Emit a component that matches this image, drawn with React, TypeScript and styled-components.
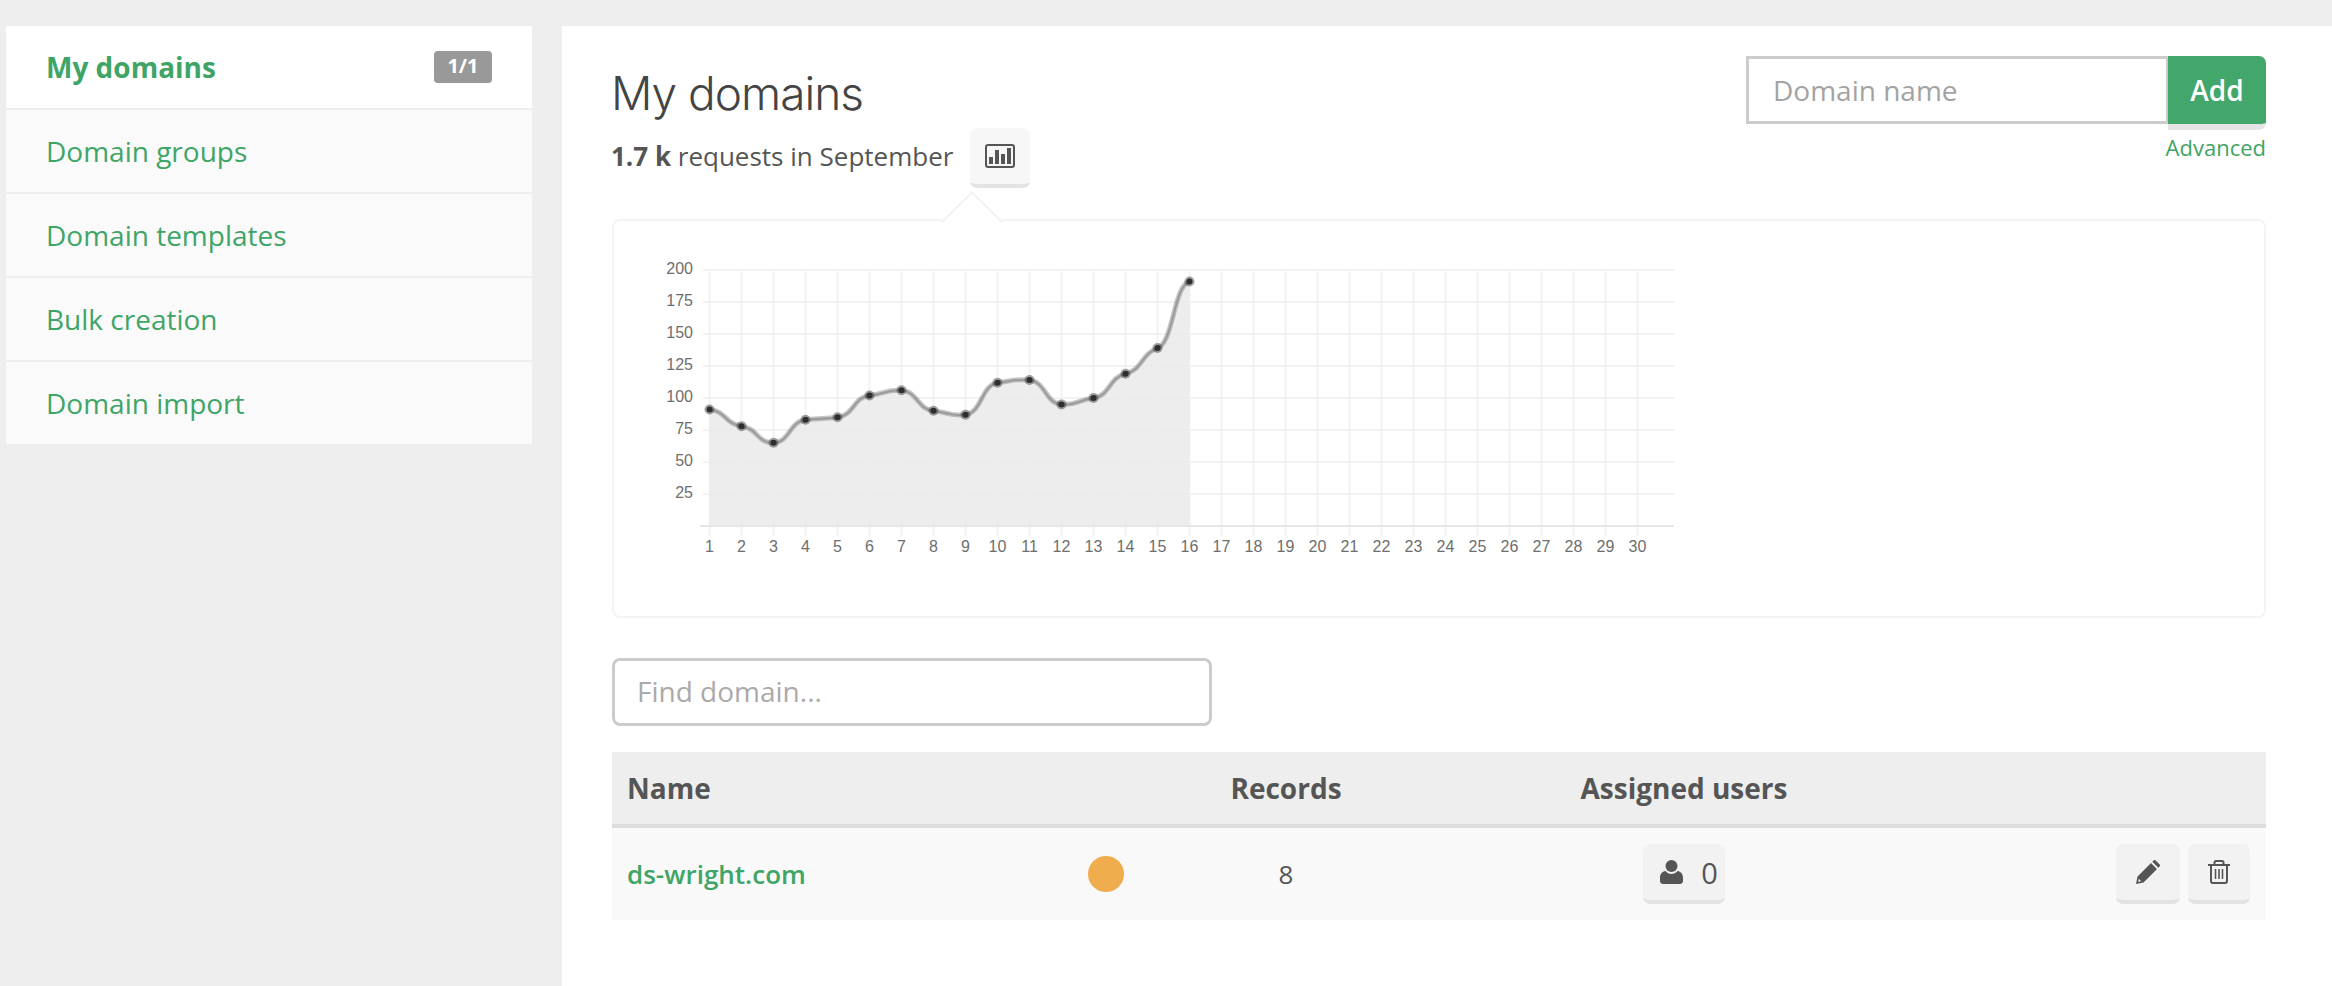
import React from 'react';
import styled, { createGlobalStyle } from 'styled-components';

const GlobalStyle = createGlobalStyle`
  * { box-sizing: border-box; }
  html, body { margin: 0; padding: 0; background: #eeeeee; }
  body { font-family: 'Open Sans', 'Liberation Sans', sans-serif; color: #555; }
`;

const GREEN = '#3fa566';

const Page = styled.div`
  display: flex;
  align-items: flex-start;
  gap: 30px;
  padding: 26px 0 0 6px;
  height: 986px;
  overflow: hidden;
`;

const Sidebar = styled.nav`
  width: 526px;
  flex-shrink: 0;
  display: flex;
  flex-direction: column;
  gap: 2px;
`;

const SideItem = styled.a<{ $active?: boolean }>`
  display: flex;
  align-items: center;
  justify-content: space-between;
  height: 82px;
  padding: 0 40px ${(p) => (p.$active ? 0 : 1)}px 40px;
  font-size: 28px;
  font-weight: ${(p) => (p.$active ? 700 : 400)};
  color: ${GREEN};
  background: ${(p) => (p.$active ? '#fff' : '#fafafa')};
`;

const Badge = styled.span`
  width: 58px;
  height: 32px;
  border-radius: 4px;
  background: #999;
  color: #fff;
  font-size: 20px;
  font-weight: 700;
  line-height: 30px;
  text-align: center;
`;

const Main = styled.main`
  flex: 1;
  height: 960px;
  background: #fff;
  padding: 30px 66px 0 50px;
`;

const Header = styled.header`
  display: flex;
  justify-content: space-between;
  align-items: flex-start;
  margin: 0 0 31px -1px;
`;

const Title = styled.h1`
  margin: 0;
  height: 72px;
  font-family: Inter, 'Liberation Sans', sans-serif;
  font-size: 46px;
  font-weight: 300;
  line-height: 74px;
  letter-spacing: -1px;
  color: #444;
`;

const StatsRow = styled.div`
  display: flex;
  align-items: flex-start;
  gap: 17px;
  font-size: 26px;
  line-height: 56px;
  height: 60px;
`;

const IconButton = styled.button<{ $width: number; $light?: boolean }>`
  display: inline-flex;
  align-items: center;
  justify-content: center;
  gap: 18px;
  width: ${(p) => p.$width}px;
  height: 60px;
  padding: 0;
  border: 0;
  border-bottom: 4px solid #e3e3e3;
  border-radius: 7px;
  background: ${(p) => (p.$light ? '#f7f7f7' : '#f2f2f2')};
  color: #555;
  font-family: inherit;
  font-size: 29px;
`;

const UserButton = styled(IconButton)`
  padding-left: 10px;
`;

const AddForm = styled.div`
  display: flex;
  flex-direction: column;
  align-items: flex-end;
`;

const AddRow = styled.div`
  display: flex;
  align-items: flex-start;
`;

const DomainInput = styled.input`
  width: 422px;
  height: 68px;
  border: 3px solid #ccc;
  border-right-width: 2px;
  border-radius: 0;
  padding: 0 24px;
  font-family: inherit;
  font-size: 28px;
  outline: none;
  &::placeholder { color: #a3a3a3; opacity: 1; }
`;

const AddButton = styled.button`
  width: 98px;
  height: 74px;
  border: 0;
  border-bottom: 6px solid #e5e5e5;
  border-radius: 0 7px 7px 0;
  padding: 0;
  background: #43a66a;
  background-clip: padding-box;
  color: #fff;
  font-family: inherit;
  font-size: 28px;
  font-weight: 600;
`;

const Advanced = styled.a`
  font-size: 22px;
  line-height: 30px;
  margin-top: 2px;
  color: ${GREEN};
`;

const ChartPanel = styled.section`
  position: relative;
  height: 399px;
  border: 2px solid #f4f4f4;
  border-radius: 8px;
  padding: 29px 0 0 26px;
`;

const Pointer = styled.span`
  position: absolute;
  top: -21px;
  left: 336px;
  width: 44px;
  height: 44px;
  background: #fff;
  border-top: 2px solid #f2f2f2;
  border-left: 2px solid #f2f2f2;
  transform: rotate(45deg);
`;

const ChartSvg = styled.svg`
  position: relative;
  display: block;
`;

const FindInput = styled.input`
  display: block;
  width: 600px;
  height: 68px;
  margin: 40px 0 26px;
  border: 3px solid #ccc;
  border-radius: 8px;
  padding: 0 22px 2px;
  font-family: inherit;
  font-size: 28px;
  outline: none;
  &::placeholder { color: #aaa; opacity: 1; }
`;

const COLUMNS = '454px 80px 280px 516px 1fr';

const HeadRow = styled.div`
  display: grid;
  grid-template-columns: ${COLUMNS};
  align-items: center;
  height: 76px;
  border-bottom: 4px solid #ddd;
  background: #eee;
  font-size: 28px;
  font-weight: 700;
`;

const BodyRow = styled.div`
  display: grid;
  grid-template-columns: ${COLUMNS};
  align-items: center;
  height: 92px;
  background: #f9f9f9;
  font-size: 26px;
`;

const Cell = styled.div<{ $center?: boolean }>`
  text-align: ${(p) => (p.$center ? 'center' : 'left')};
  padding-left: ${(p) => (p.$center ? 0 : 15)}px;
  display: ${(p) => (p.$center ? 'flex' : 'block')};
  justify-content: center;
`;

const DomainLink = styled.a`
  color: ${GREEN};
  font-size: 26px;
  font-weight: 600;
`;

const StatusDot = styled.span`
  display: block;
  width: 36px;
  height: 36px;
  border-radius: 50%;
  background: #f0ad4e;
`;

const Actions = styled.div`
  display: flex;
  justify-content: flex-end;
  gap: 8px;
  padding-right: 16px;
`;

const days = Array.from({ length: 30 }, (_, i) => i + 1);
const values = [91, 78, 65, 83, 85, 102, 106, 90, 87, 112, 114, 95, 100, 119, 139, 191];
const ticks = [25, 50, 75, 100, 125, 150, 175, 200];
const dayX = (d: number) => 709.5 + (d - 1) * 32;
const valY = (v: number) => 526 - v * 1.28;

const points = values.map((v, i) => ({ x: dayX(i + 1), y: valY(v) }));

const linePath = points.reduce((path, p, i) => {
  if (i === 0) return `M${p.x} ${p.y}`;
  const prev = points[i - 1];
  const before = points[i - 2] || prev;
  const after = points[i + 1] || p;
  const c1y = prev.y + (p.y - before.y) * 0.06;
  const c2y = p.y - (after.y - prev.y) * 0.06;
  return `${path} C${prev.x + 16} ${c1y} ${p.x - 16} ${c2y} ${p.x} ${p.y}`;
}, '');

const ChartLabel = styled.text`
  font-family: 'Liberation Sans', Arial, sans-serif;
  font-size: 16px;
  fill: #6e6e6e;
`;

const Chart = () => (
  <ChartSvg width={1060} height={320} viewBox="640 250 1060 320">
    {ticks.map((t) => (
      <g key={t}>
        <line x1={703} x2={1674} y1={valY(t)} y2={valY(t)} stroke="#f3f3f3" strokeWidth={2} />
        <ChartLabel x={693} y={valY(t) + 4} textAnchor="end">
          {t}
        </ChartLabel>
      </g>
    ))}
    {days.map((d) => (
      <g key={d}>
        <line x1={dayX(d)} x2={dayX(d)} y1={270} y2={536} stroke="#f3f3f3" strokeWidth={2} />
        <ChartLabel x={dayX(d)} y={552} textAnchor="middle">
          {d}
        </ChartLabel>
      </g>
    ))}
    <line x1={700} x2={1674} y1={526} y2={526} stroke="#e6e6e6" strokeWidth={2} />
    <path d={`${linePath} L${dayX(16)} 526 L${dayX(1)} 526 Z`} fill="rgba(232,232,232,0.8)" />
    <path d={linePath} fill="none" stroke="rgba(70,70,70,0.3)" strokeWidth={5} />
    <path d={linePath} fill="none" stroke="rgba(70,70,70,0.3)" strokeWidth={2} />
    {points.map((p) => (
      <g key={p.x}>
        <circle cx={p.x} cy={p.y} r={5} fill="rgba(50,50,50,0.45)" />
        <circle cx={p.x} cy={p.y} r={3} fill="#2e2e2e" />
      </g>
    ))}
  </ChartSvg>
);

const StatsIcon = () => (
  <svg width={30} height={24} viewBox="0 0 30 24" fill="#555">
    <rect x={1} y={1} width={28} height={22} rx={2} fill="none" stroke="#555" strokeWidth={2} />
    <rect x={4} y={13} width={4} height={7} />
    <rect x={10} y={6} width={4} height={14} />
    <rect x={16} y={10} width={4} height={10} />
    <rect x={22} y={4} width={4} height={16} />
  </svg>
);

const UserIcon = () => (
  <svg width={23} height={24} viewBox="0 0 23 24" fill="#555">
    <circle cx={11.5} cy={6} r={6} />
    <path d="M5.500 11 C7 13 9 14 11.500 14 C14 14 16 13 17.500 11 C21 11.500 23 14 23 18 V21 C23 23 21.500 24 20 24 H3 C1.500 24 0 23 0 21 V18 C0 14 2 11.500 5.500 11 Z" />
  </svg>
);

const PencilIcon = () => (
  <svg width={24} height={24} viewBox="0 0 24 24" fill="#555">
    <path d="M0 24 L1.500 16.500 L15 3 L21 9 L7.500 22.500 Z M2.800 18.800 L2.200 21.800 L5.200 21.200 Z" fillRule="evenodd" />
    <path d="M16.300 1.700 L17.500 0.500 C18.200 -0.200 19 -0.200 19.700 0.500 L23.500 4.300 C24.200 5 24.200 5.800 23.500 6.500 L22.300 7.700 Z" />
  </svg>
);

const TrashIcon = () => (
  <svg width={22} height={24} viewBox="0 0 22 24" fill="none" stroke="#555" strokeWidth={2}>
    <path d="M0 5 H22" />
    <path d="M6.500 5 V2.500 C6.500 1.500 7.200 1 8 1 H14 C14.800 1 15.500 1.500 15.500 2.500 V5" />
    <path d="M3 5 V21 C3 22.200 3.800 23 5 23 H17 C18.200 23 19 22.200 19 21 V5" />
    <path d="M7.500 9 V19 M11 9 V19 M14.500 9 V19" strokeWidth={1.6} />
  </svg>
);

export default function App() {
  return (
    <>
      <GlobalStyle />
      <Page>
        <Sidebar>
          <SideItem $active>
            My domains
            <Badge>1/1</Badge>
          </SideItem>
          <SideItem>Domain groups</SideItem>
          <SideItem>Domain templates</SideItem>
          <SideItem>Bulk creation</SideItem>
          <SideItem>Domain import</SideItem>
        </Sidebar>
        <Main>
          <Header>
            <div>
              <Title>My domains</Title>
              <StatsRow>
                <span>
                  <b>1.7 k</b> requests in September
                </span>
                <IconButton $width={60} $light>
                  <StatsIcon />
                </IconButton>
              </StatsRow>
            </div>
            <AddForm>
              <AddRow>
                <DomainInput placeholder="Domain name" />
                <AddButton>Add</AddButton>
              </AddRow>
              <Advanced>Advanced</Advanced>
            </AddForm>
          </Header>
          <ChartPanel>
            <Pointer />
            <Chart />
          </ChartPanel>
          <FindInput placeholder="Find domain..." />
          <HeadRow>
            <Cell>Name</Cell>
            <div />
            <Cell $center>Records</Cell>
            <Cell $center>Assigned users</Cell>
            <div />
          </HeadRow>
          <BodyRow>
            <Cell>
              <DomainLink>ds-wright.com</DomainLink>
            </Cell>
            <Cell $center>
              <StatusDot />
            </Cell>
            <Cell $center>8</Cell>
            <Cell $center>
              <UserButton $width={82}>
                <UserIcon />0
              </UserButton>
            </Cell>
            <Actions>
              <IconButton $width={64}>
                <PencilIcon />
              </IconButton>
              <IconButton $width={62}>
                <TrashIcon />
              </IconButton>
            </Actions>
          </BodyRow>
        </Main>
      </Page>
    </>
  );
}
